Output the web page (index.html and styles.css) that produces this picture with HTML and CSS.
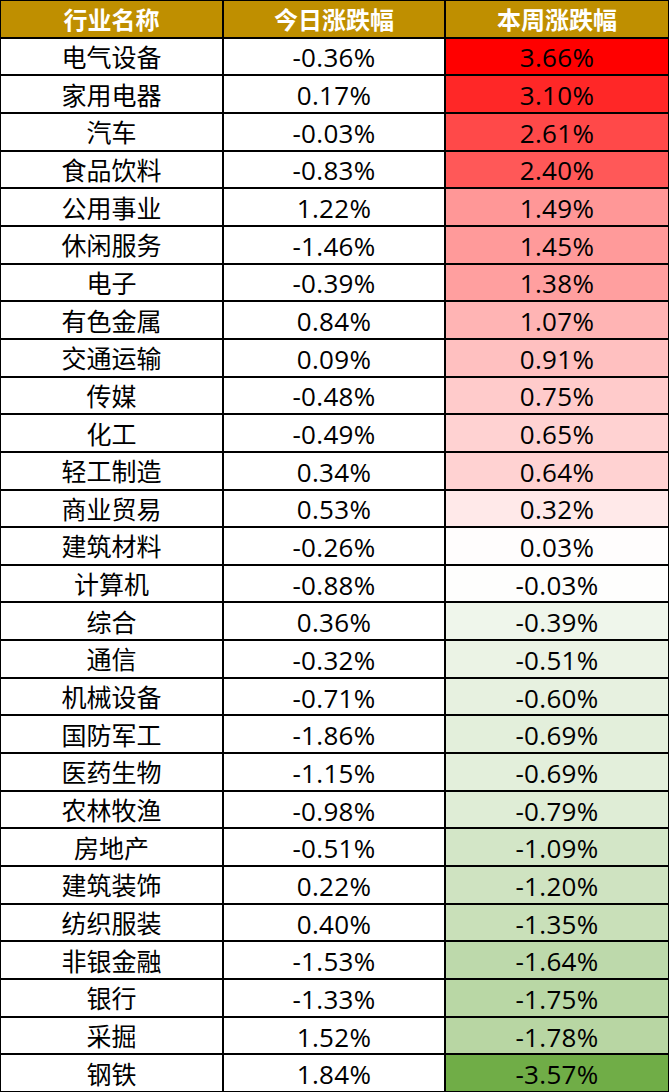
FILE: index.html
```html
<!DOCTYPE html>
<html lang="zh-CN">
<head>
<meta charset="utf-8">
<link rel="stylesheet" href="styles.css">
</head>
<body>
<div class="sheet">
  <div class="cell head">行业名称</div><div class="cell head">今日涨跌幅</div><div class="cell head">本周涨跌幅</div>
  <div class="cell name">电气设备</div><div class="cell num">-0.36%</div><div class="cell num" style="background:rgb(255,0,0)">3.66%</div>
  <div class="cell name">家用电器</div><div class="cell num">0.17%</div><div class="cell num" style="background:rgb(255,39,39)">3.10%</div>
  <div class="cell name">汽车</div><div class="cell num">-0.03%</div><div class="cell num" style="background:rgb(255,73,73)">2.61%</div>
  <div class="cell name">食品饮料</div><div class="cell num">-0.83%</div><div class="cell num" style="background:rgb(255,88,88)">2.40%</div>
  <div class="cell name">公用事业</div><div class="cell num">1.22%</div><div class="cell num" style="background:rgb(255,151,151)">1.49%</div>
  <div class="cell name">休闲服务</div><div class="cell num">-1.46%</div><div class="cell num" style="background:rgb(255,154,154)">1.45%</div>
  <div class="cell name">电子</div><div class="cell num">-0.39%</div><div class="cell num" style="background:rgb(255,159,159)">1.38%</div>
  <div class="cell name">有色金属</div><div class="cell num">0.84%</div><div class="cell num" style="background:rgb(255,180,180)">1.07%</div>
  <div class="cell name">交通运输</div><div class="cell num">0.09%</div><div class="cell num" style="background:rgb(255,192,192)">0.91%</div>
  <div class="cell name">传媒</div><div class="cell num">-0.48%</div><div class="cell num" style="background:rgb(255,203,203)">0.75%</div>
  <div class="cell name">化工</div><div class="cell num">-0.49%</div><div class="cell num" style="background:rgb(255,210,210)">0.65%</div>
  <div class="cell name">轻工制造</div><div class="cell num">0.34%</div><div class="cell num" style="background:rgb(255,210,210)">0.64%</div>
  <div class="cell name">商业贸易</div><div class="cell num">0.53%</div><div class="cell num" style="background:rgb(255,233,233)">0.32%</div>
  <div class="cell name">建筑材料</div><div class="cell num">-0.26%</div><div class="cell num" style="background:rgb(255,253,253)">0.03%</div>
  <div class="cell name">计算机</div><div class="cell num">-0.88%</div><div class="cell num" style="background:rgb(254,254,253)">-0.03%</div>
  <div class="cell name">综合</div><div class="cell num">0.36%</div><div class="cell num" style="background:rgb(239,246,235)">-0.39%</div>
  <div class="cell name">通信</div><div class="cell num">-0.32%</div><div class="cell num" style="background:rgb(235,243,229)">-0.51%</div>
  <div class="cell name">机械设备</div><div class="cell num">-0.71%</div><div class="cell num" style="background:rgb(231,241,224)">-0.60%</div>
  <div class="cell name">国防军工</div><div class="cell num">-1.86%</div><div class="cell num" style="background:rgb(227,239,219)">-0.69%</div>
  <div class="cell name">医药生物</div><div class="cell num">-1.15%</div><div class="cell num" style="background:rgb(227,239,219)">-0.69%</div>
  <div class="cell name">农林牧渔</div><div class="cell num">-0.98%</div><div class="cell num" style="background:rgb(223,237,214)">-0.79%</div>
  <div class="cell name">房地产</div><div class="cell num">-0.51%</div><div class="cell num" style="background:rgb(211,230,199)">-1.09%</div>
  <div class="cell name">建筑装饰</div><div class="cell num">0.22%</div><div class="cell num" style="background:rgb(207,227,193)">-1.20%</div>
  <div class="cell name">纺织服装</div><div class="cell num">0.40%</div><div class="cell num" style="background:rgb(201,224,185)">-1.35%</div>
  <div class="cell name">非银金融</div><div class="cell num">-1.53%</div><div class="cell num" style="background:rgb(189,217,171)">-1.64%</div>
  <div class="cell name">银行</div><div class="cell num">-1.33%</div><div class="cell num" style="background:rgb(185,215,165)">-1.75%</div>
  <div class="cell name">采掘</div><div class="cell num">1.52%</div><div class="cell num" style="background:rgb(184,214,163)">-1.78%</div>
  <div class="cell name">钢铁</div><div class="cell num">1.84%</div><div class="cell num" style="background:rgb(112,173,71)">-3.57%</div>
</div>
</body>
</html>
```

FILE: styles.css
```css
html, body {
  margin: 0;
  padding: 0;
  background: #ffffff;
}

.sheet {
  box-sizing: border-box;
  width: 669px;
  height: 1092px;
  background: #000000;
  padding: 1px;
  display: grid;
  grid-template-columns: 221px 220px 1fr;
  grid-template-rows: repeat(29, 1fr);
  column-gap: 2px;
  row-gap: 2px;
  font-family: "Open Sans", "Noto Sans CJK SC", sans-serif;
}

.cell {
  background: #ffffff;
  color: #000000;
  display: flex;
  align-items: center;
  justify-content: center;
  line-height: 1;
}

.name {
  font-family: "Noto Sans CJK SC", sans-serif;
  font-size: 25px;
}

.num {
  font-size: 26px;
  letter-spacing: 0.3px;
  padding-top: 2px;
}

.head {
  background: #bf8f00;
  color: #ffffff;
  font-family: "Noto Sans CJK SC", sans-serif;
  font-weight: 700;
  font-size: 24px;
}
```
